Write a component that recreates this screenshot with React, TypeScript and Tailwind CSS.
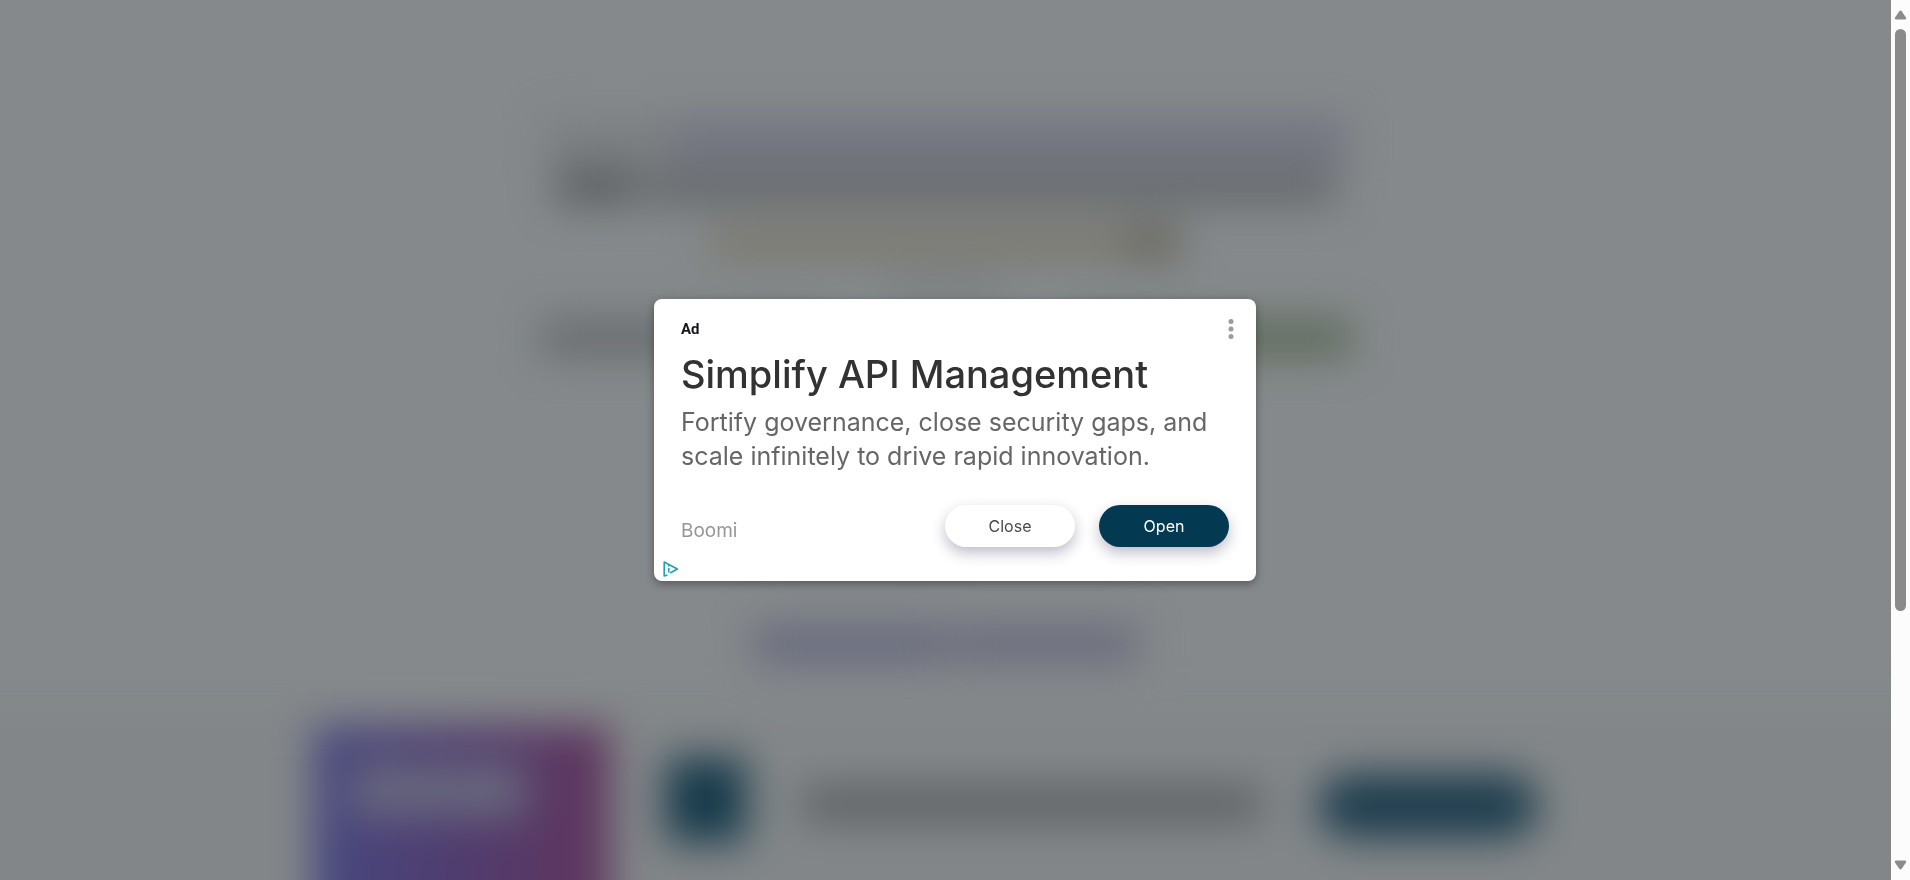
import type { ReactNode } from "react";

function Backdrop() {
  return (
    <div aria-hidden="true" className="flex min-w-0 flex-1 flex-col overflow-hidden bg-[#85898b]">
      <div className="-mx-16 -mb-16 flex flex-1 flex-col blur-[20px]">
        <div className="flex h-[706px] shrink-0 flex-col items-center pt-[120px]">
          <div className="flex h-10 w-[800px]">
            <div className="w-[130px] bg-[#7a7e80]" />
            <div className="flex-1 bg-[#717380]" />
          </div>
          <div className="mt-2 flex h-9 w-[780px] gap-2">
            <div className="w-20 bg-[#5b5e61]" />
            <div className="flex-1 bg-[#66696c]" />
          </div>
          <div className="mt-5 flex h-9 w-[470px]">
            <div className="flex-1 bg-[#7b7a70]" />
            <div className="w-14 bg-[#69685e]" />
          </div>
          <div className="mt-6 h-4 w-28 bg-[#75797c]" />
          <div className="mt-5 flex h-9 w-[810px] justify-between">
            <div className="w-72 bg-[#676b6d]" />
            <div className="w-72 bg-[#5d6a5a]" />
          </div>
          <div className="mt-[270px] flex h-9 w-[384px] gap-1">
            <div className="w-48 bg-[#66687c]" />
            <div className="flex-1 bg-[#696b7c]" />
          </div>
        </div>
        <div className="flex flex-1 justify-center gap-14 bg-[#828688] pr-10">
          <div className="mt-5 w-[296px] bg-linear-to-r from-[#464880] via-[#503c6e] to-[#60355c] px-9 pt-9">
            <div className="h-14 w-44 bg-[#67667d]" />
          </div>
          <div className="mt-[52px] h-[84px] w-[80px] bg-[#173a4b]" />
          <div className="mt-20 h-9 w-[460px] bg-[#5e6264]" />
          <div className="mt-[68px] h-16 w-[220px] rounded-full bg-[#1e3d4e]" />
        </div>
      </div>
    </div>
  );
}

function Scrollbar() {
  return (
    <div aria-hidden="true" className="flex w-[19px] shrink-0 flex-col items-center bg-[#fcfcfc] py-[10px]">
      <svg width="13" height="10" viewBox="0 0 13 10" fill="#8b8b8b">
        <path d="M5.3 1.2Q6.5 0 7.7 1.2L12 7.5Q12.8 9.5 11 9.5H2Q.2 9.5 1 7.5Z" />
      </svg>
      <div className="min-h-0 flex-1 pt-[9px]">
        <div className="h-[70%] w-[11px] rounded-full bg-[#8b8b8b]" />
      </div>
      <svg width="13" height="10" viewBox="0 0 13 10" fill="#8b8b8b">
        <path d="M5.3 8.8Q6.5 10 7.7 8.8L12 2.5Q12.8.5 11 .5H2Q.2.5 1 2.5Z" />
      </svg>
    </div>
  );
}

function Pill({ className, children }: { className: string; children: ReactNode }) {
  return (
    <button
      type="button"
      className={`h-[42px] w-[130px] rounded-full text-[16px] shadow-[0_6px_14px_rgba(40,40,80,0.3)] ${className}`}
    >
      {children}
    </button>
  );
}

function AdCard() {
  return (
    <section
      role="dialog"
      aria-labelledby="ad-title"
      className="flex w-[602px] flex-col rounded-lg bg-white px-[27px] pt-5 pb-1 shadow-[0_3px_8px_rgba(0,0,0,0.35)]"
    >
      <div className="flex h-5 items-center justify-between">
        <span className="font-[Roboto,sans-serif] text-[15px] leading-5 font-bold text-[#15151f]">Ad</span>
        <button type="button" aria-label="More options" className="-mr-[14px] flex h-6 w-6 items-center justify-center">
          <svg width="6" height="22" viewBox="0 0 6 22" fill="#9b9b9b">
            <circle cx="3" cy="3.5" r="2.5" />
            <circle cx="3" cy="11" r="2.5" />
            <circle cx="3" cy="18.5" r="2.5" />
          </svg>
        </button>
      </div>
      <h1 id="ad-title" className="mt-3 text-[38px] leading-[46px] font-medium whitespace-nowrap text-[#323232]">
        Simplify API Management
      </h1>
      <p className="mt-2 text-[25px] leading-[34px] whitespace-nowrap text-[#666]">
        Fortify governance, close security gaps, and
        <br />
        scale infinitely to drive rapid innovation.
      </p>
      <div className="mt-8 flex items-start justify-between">
        <a href="#boomi" className="pt-3 text-[19px] leading-7 text-[#969696]">
          Boomi
        </a>
        <div className="flex gap-6">
          <Pill className="bg-white text-[#4a4a4a]">Close</Pill>
          <Pill className="bg-[#033a52] text-white">Open</Pill>
        </div>
      </div>
      <a href="#adchoices" aria-label="AdChoices" className="mt-[14px] -ml-[18px] w-4">
        <svg width="16" height="16" viewBox="0 0 16 16" fill="none" stroke="#22a0b2" strokeWidth="1.6" strokeLinejoin="round">
          <path d="M4.5 14.1 1.2 15V1L14.3 8 7.2 12" />
          <path d="M5.8 7V11.5M5.8 3.9V5.4" />
        </svg>
      </a>
    </section>
  );
}

export default function App() {
  return (
    <div className="flex h-screen overflow-hidden font-[Inter,sans-serif]">
      <Backdrop />
      <Scrollbar />
      <main className="fixed inset-0 flex items-center justify-center">
        <AdCard />
      </main>
    </div>
  );
}
